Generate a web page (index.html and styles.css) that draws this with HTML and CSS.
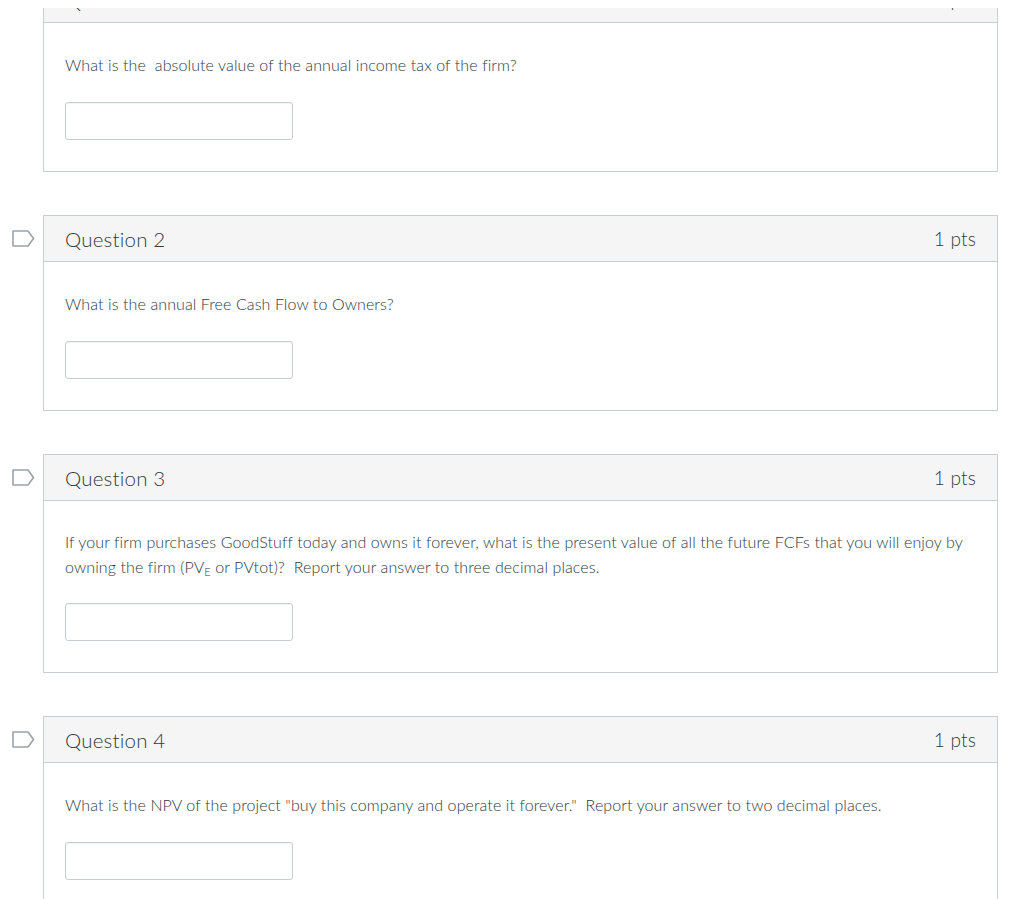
FILE: index.html
```html
<!DOCTYPE html>
<html lang="en">
<head>
<meta charset="utf-8">
<title>Quiz</title>
<link rel="stylesheet" href="styles.css">
</head>
<body>
<div class="viewport">
  <div class="question-row first">
    <div class="flag-col"></div>
    <div class="card">
      <div class="card-header"><span class="q-name">Question 1</span><span class="q-pts">1 pts</span></div>
      <div class="card-body">
        <p class="q-text">What is the&nbsp; absolute value of the annual income tax of the firm?</p>
        <input class="answer" type="text">
      </div>
    </div>
  </div>

  <div class="question-row">
    <div class="flag-col">
      <svg class="flag" width="23" height="17" viewBox="0 0 23 17"><path d="M1 1 H16 L21.5 8.5 L16 16 H1 Z" fill="none" stroke="#9aa3a9" stroke-width="1.6" stroke-linejoin="round"/></svg>
    </div>
    <div class="card">
      <div class="card-header"><span class="q-name">Question 2</span><span class="q-pts">1 pts</span></div>
      <div class="card-body">
        <p class="q-text">What is the annual Free Cash Flow to Owners?</p>
        <input class="answer" type="text">
      </div>
    </div>
  </div>

  <div class="question-row">
    <div class="flag-col">
      <svg class="flag" width="23" height="17" viewBox="0 0 23 17"><path d="M1 1 H16 L21.5 8.5 L16 16 H1 Z" fill="none" stroke="#9aa3a9" stroke-width="1.6" stroke-linejoin="round"/></svg>
    </div>
    <div class="card">
      <div class="card-header"><span class="q-name">Question 3</span><span class="q-pts">1 pts</span></div>
      <div class="card-body">
        <p class="q-text multi">If your firm purchases GoodStuff today and owns it forever, what is the present value of all the future FCFs that you will enjoy by owning the firm (PV<sub>E</sub> or PVtot)?&nbsp; Report your answer to three decimal places.</p>
        <input class="answer" type="text">
      </div>
    </div>
  </div>

  <div class="question-row">
    <div class="flag-col">
      <svg class="flag" width="23" height="17" viewBox="0 0 23 17"><path d="M1 1 H16 L21.5 8.5 L16 16 H1 Z" fill="none" stroke="#9aa3a9" stroke-width="1.6" stroke-linejoin="round"/></svg>
    </div>
    <div class="card">
      <div class="card-header"><span class="q-name">Question 4</span><span class="q-pts">1 pts</span></div>
      <div class="card-body">
        <p class="q-text">What is the NPV of the project "buy this company and operate it forever."&nbsp; Report your answer to two decimal places.</p>
        <input class="answer" type="text">
      </div>
    </div>
  </div>
</div>
</body>
</html>
```

FILE: styles.css
```css
html, body {
  margin: 0;
  padding: 0;
  background: #ffffff;
}

body {
  font-family: Lato, "Open Sans", "Liberation Sans", sans-serif;
  color: #2d3b45;
}

.viewport {
  margin-top: 8px;
  height: 891px;
  overflow: hidden;
}

.question-row {
  display: flex;
  align-items: flex-start;
  margin-bottom: 43px;
}

.question-row.first {
  margin-top: -32px;
}

.flag-col {
  width: 43px;
  flex: none;
  display: flex;
  padding-top: 15px;
}

.flag {
  display: block;
  margin-left: 12px;
}

.card {
  flex: 1;
  margin-right: 26px;
  border: 1px solid #c7cdd1;
  background: #fff;
}

.card-header {
  display: flex;
  align-items: center;
  justify-content: space-between;
  height: 45px;
  padding: 0 21px;
  background: #f5f5f5;
  border-bottom: 1px solid #c7cdd1;
  font-size: 20.5px;
  font-weight: 300;
  letter-spacing: 0.2px;
}

.q-pts {
  font-size: 19px;
}

.card-body {
  padding: 29px 22px 31px 21px;
}

.q-text {
  margin: 0 0 25px;
  font-size: 16px;
  font-weight: 300;
  line-height: 25px;
  letter-spacing: 0.1px;
}

.q-text.multi {
  margin-top: -1px;
  margin-bottom: 24px;
}

.q-text sub {
  font-size: 11px;
  line-height: 1;
  vertical-align: baseline;
  position: relative;
  top: 3px;
}

.answer {
  display: block;
  box-sizing: border-box;
  width: 228px;
  height: 38px;
  margin: 0;
  border: 1px solid #c7cdd1;
  border-radius: 3px;
  background: #fff;
  box-shadow: inset 0 1px 1px rgba(0,0,0,0.05);
}
```
